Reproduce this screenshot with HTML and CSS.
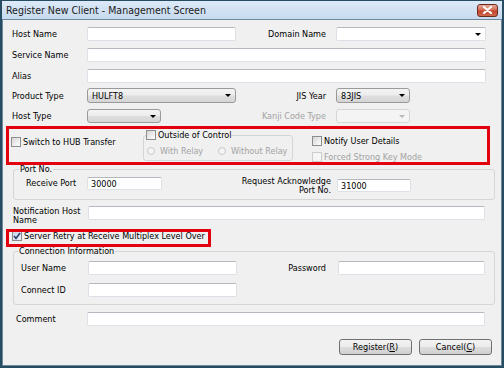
FILE: index.html
```html
<!DOCTYPE html>
<html>
<head>
<meta charset="utf-8">
<link rel="stylesheet" href="styles.css">
</head>
<body>
<div class="window">
  <div class="titlebar">
    <span class="title">Register New Client - Management Screen</span>
    <span class="close"><svg width="11" height="8" viewBox="0 0 11 8"><path d="M2 1 L9 7 M9 1 L2 7" stroke="#fff" stroke-width="2.2" stroke-linecap="round"/></svg></span>
  </div>
  <div class="client">
    <div class="row r1">
      <span class="lbl">Host Name</span><span class="tb"></span>
      <span class="rlbl">Domain Name</span><span class="combo edit"><i class="arr"></i></span>
    </div>
    <div class="row r2">
      <span class="lbl">Service Name</span><span class="tb span3"></span>
    </div>
    <div class="row r3">
      <span class="lbl">Alias</span><span class="tb span3"></span>
    </div>
    <div class="row r4">
      <span class="lbl">Product Type</span><span class="combo"><span class="val">HULFT8</span><i class="arr"></i></span>
      <span class="rlbl">JIS Year</span><span class="combo short"><span class="val">83JIS</span><i class="arr"></i></span>
    </div>
    <div class="row r5">
      <span class="lbl">Host Type</span><span class="combo short"><i class="arr"></i></span>
      <span class="rlbl dis">Kanji Code Type</span><span class="combo short disabled"><i class="arr"></i></span>
    </div>

    <div class="opts">
      <div class="chk hub"><span class="cb"></span>Switch to HUB Transfer</div>
      <fieldset class="grp ooc">
        <legend><span class="chk"><span class="cb"></span>Outside of Control</span></legend>
        <div class="radios">
          <span class="rad r-with dis"><span class="rb"></span>With Relay</span>
          <span class="rad dis"><span class="rb"></span>Without Relay</span>
        </div>
      </fieldset>
      <div class="notify">
        <div class="chk"><span class="cb"></span>Notify User Details</div>
        <div class="chk forced dis"><span class="cb off"></span>Forced Strong Key Mode</div>
      </div>
    </div>

    <fieldset class="grp port">
      <legend>Port No.</legend>
      <div class="port-row">
        <span class="rp-lbl">Receive Port</span>
        <span class="tb rp-in"><span class="val">30000</span></span>
        <span class="req-lbl">Request Acknowledge<br>Port No.</span>
        <span class="tb req-in"><span class="val">31000</span></span>
      </div>
    </fieldset>

    <div class="notif-row">
      <span class="nt-lbl">Notification Host<br>Name</span>
      <span class="tb nt-in"></span>
    </div>

    <div class="chk retry"><span class="cb on"><svg width="8" height="8" viewBox="0 0 8 8"><path d="M1 4 L3 6.5 L7 1" fill="none" stroke="#2b3f73" stroke-width="1.6"/></svg></span>Server Retry at Receive Multiplex Level Over</div>

    <fieldset class="grp conn">
      <legend>Connection Information</legend>
      <div class="conn-row">
        <span class="cn-lbl">User Name</span><span class="tb cn-in"></span>
        <span class="pw-lbl">Password</span><span class="tb pw-in"></span>
      </div>
      <div class="conn-row second">
        <span class="cn-lbl">Connect ID</span><span class="tb cn-in"></span>
      </div>
    </fieldset>

    <div class="comment-row">
      <span class="cm-lbl">Comment</span><span class="tb cm-in"></span>
    </div>

    <div class="btns">
      <span class="btn">Register(<u>R</u>)</span>
      <span class="btn">Cancel(<u>C</u>)</span>
    </div>

    <div class="hl hl1"></div>
    <div class="hl hl2"></div>
  </div>
</div>
</body>
</html>
```

FILE: styles.css
```css
body {
  margin: 0;
  font-family: "DejaVu Sans Condensed", "DejaVu Sans", "Liberation Sans", sans-serif;
  font-stretch: condensed;
  font-size: 9px;
  color: #000;
}

.window {
  width: 504px;
  height: 368px;
  box-sizing: border-box;
  border: 1px solid #284c61;
  border-width: 1px 2px 2px 2px;
  background: #c5d8ec;
  display: flex;
  flex-direction: column;
}

.titlebar {
  height: 18px;
  flex: none;
  display: flex;
  align-items: center;
  padding-left: 4px;
  background: linear-gradient(#dce9f7, #c7daee);
}

.title {
  font-family: "DejaVu Sans Condensed", "DejaVu Sans", sans-serif;
  font-size: 10.5px;
  color: #1b1b1b;
}

.close {
  margin-left: auto;
  margin-right: 4px;
  width: 21px;
  height: 13px;
  box-sizing: border-box;
  border: 1px solid #6e2b22;
  border-radius: 3px;
  background: linear-gradient(#e9a999, #d36a53 45%, #c1432b 55%, #cf6a4f);
  display: flex;
  align-items: center;
  justify-content: center;
}

.client {
  flex: 1;
  position: relative;
  border: 1px solid #6d88a1;
  background: #f0f0f0;
}

.row {
  display: grid;
  grid-template-columns: 75px 149px 100px 150px;
  align-items: center;
  margin-left: 9px;
  height: 14px;
}
.r1 { margin-top: 7px; }
.r2 { margin-top: 7px; }
.r3 { margin-top: 7px; }
.r4 { margin-top: 5px; height: 15px; }
.r5 { margin-top: 6px; }

.lbl { white-space: nowrap; }
.rlbl { text-align: right; padding-right: 10px; white-space: nowrap; }
.dis { color: #a3a3a3; }

.tb {
  display: flex;
  align-items: center;
  height: 14px;
  box-sizing: border-box;
  background: #fff;
  border: 1px solid #dde1e7;
  border-top-color: #b5b8be;
  border-radius: 2px;
}
.span3 { grid-column: 2 / 5; }

.combo {
  display: flex;
  align-items: center;
  height: 100%;
  box-sizing: border-box;
  padding-left: 3px;
  border: 1px solid #9a9a9a;
  border-radius: 3px;
  background: linear-gradient(#f4f4f4, #ececec 48%, #dedede 52%, #d6d6d6);
}
.combo.edit {
  background: #fff;
  border: 1px solid #dde1e7;
  border-top-color: #b5b8be;
  border-radius: 2px;
}
.combo.short { width: 74px; }
.combo.disabled {
  background: #f4f4f4;
  border-color: #d6d6d6;
}
.combo.disabled .arr { border-top-color: #b8b8b8; }

.val { font-size: 9px; padding-left: 1px; }

.arr {
  margin-left: auto;
  margin-right: 4px;
  width: 0;
  height: 0;
  border-left: 3px solid transparent;
  border-right: 3px solid transparent;
  border-top: 3px solid #000;
}

/* checkboxes & radios */
.chk {
  display: flex;
  align-items: center;
  white-space: nowrap;
  line-height: 10px;
}
.cb {
  flex: none;
  width: 10px;
  height: 10px;
  box-sizing: border-box;
  margin-right: 2px;
  border: 1px solid #8c8d8e;
  background: linear-gradient(135deg, #d5d5d5, #f3f3f3 70%, #ffffff);
  display: flex;
  align-items: center;
  justify-content: center;
}
.cb.off {
  border-color: #cdcdcd;
  background: #f6f6f6;
}
.cb.on {
  background: linear-gradient(135deg, #c9d2e6, #eef1f8);
}
.rad {
  display: inline-flex;
  align-items: center;
  white-space: nowrap;
}
.rb {
  width: 8px;
  height: 8px;
  box-sizing: border-box;
  border: 1px solid #c9c9c9;
  border-radius: 50%;
  background: #f4f4f4;
  margin-right: 5px;
}
.r-with { width: 71px; }

.opts {
  display: flex;
  align-items: flex-start;
  height: 41px;
  padding-left: 8px;
}
.hub { width: 132px; margin-top: 14px; }

fieldset.grp {
  margin: 0;
  padding: 0;
  border: 1px solid #d3d6d9;
  border-radius: 3px;
  min-width: 0;
  box-sizing: border-box;
}
legend {
  padding: 0 1px;
  margin: 0;
  line-height: 11px;
}

.ooc {
  width: 150px;
  height: 31px;
  margin-top: 7px !important;
  padding: 0 0 0 2px !important;
}
.ooc legend { padding: 0; }
.radios {
  display: flex;
  margin-top: 6px;
  margin-left: 1px;
}

.notify { margin-left: 19px; margin-top: 13px; }
.forced { margin-top: 6px; }

/* port */
.port {
  margin-left: 10px !important;
  width: 482px;
  height: 36px;
  padding-left: 5px !important;
}
.port-row { display: flex; align-items: flex-start; }
.rp-lbl { margin-left: 7px; width: 61px; margin-top: 3px; line-height: 10px; }
.rp-in { width: 75px; height: 13px; margin-top: 2px; }
.req-lbl {
  width: 175px;
  box-sizing: border-box;
  padding-right: 6px;
  text-align: right;
  line-height: 9px;
  margin-top: 2px;
}
.req-in { width: 74px; height: 13px; margin-top: 4px; }
.rp-in .val, .req-in .val { padding-left: 3px; }

/* notification */
.notif-row { display: flex; align-items: flex-start; margin-top: 6px; }
.nt-lbl { margin-left: 10px; width: 75px; line-height: 9px; padding-top: 1px; }
.nt-in { width: 397px; }

.retry { margin-left: 9px; margin-top: 6px; }

/* connection */
.conn {
  margin-left: 10px !important;
  margin-top: 5px !important;
  width: 482px;
  height: 59px;
  padding-left: 4px !important;
}
.conn-row { display: flex; align-items: center; margin-top: 4px; }
.conn-row.second { margin-top: 8px; }
.cn-lbl { margin-left: 3px; width: 67px; }
.cn-in { width: 149px; }
.pw-lbl { width: 101px; box-sizing: border-box; padding-right: 12px; text-align: right; }
.pw-in { width: 147px; }

/* comment */
.comment-row { display: flex; align-items: center; margin-top: 7px; }
.cm-lbl { margin-left: 13px; width: 71px; }
.cm-in { width: 398px; }

/* buttons */
.btns {
  display: flex;
  justify-content: flex-end;
  gap: 7px;
  margin-right: 9px;
  margin-top: 13px;
}
.btn {
  width: 73px;
  height: 16px;
  box-sizing: border-box;
  border: 1px solid #707070;
  border-radius: 3px;
  background: linear-gradient(#f3f3f3, #ebebeb 48%, #dddddd 52%, #d0d0d0);
  display: flex;
  align-items: center;
  justify-content: center;
}

/* highlight annotations */
.hl {
  position: absolute;
  box-sizing: border-box;
  border: 3px solid #e3000f;
}
.hl1 { left: 3px; top: 106px; width: 484px; height: 39px; }
.hl2 { left: 3px; top: 209px; width: 205px; height: 18px; }
```
